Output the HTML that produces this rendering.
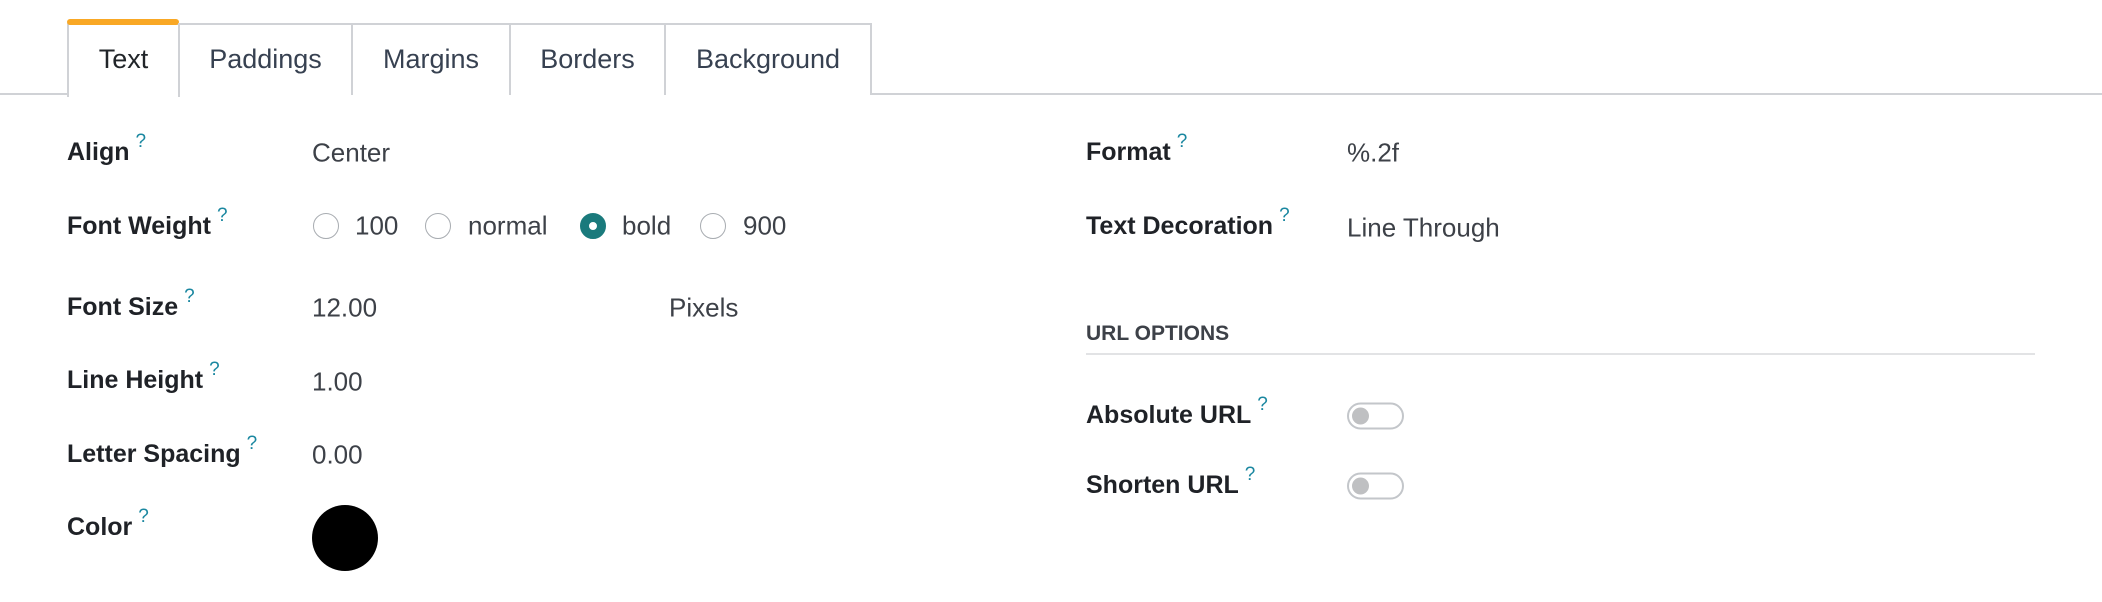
<!DOCTYPE html>
<html><head><meta charset="utf-8"><style>
*{margin:0;padding:0;box-sizing:border-box}
body{width:2102px;height:602px;background:#fff;font-family:"Liberation Sans",sans-serif;position:relative;overflow:hidden;color:#212529}
.a{position:absolute;white-space:nowrap}
.tab{position:absolute;top:23px;height:72px;border:2px solid #d0d2d6;border-bottom:none;font-size:27px;color:#374151;text-align:center;line-height:68px;background:#fff}
.lbl{position:absolute;font-size:25px;font-weight:bold;color:#1f2227;white-space:nowrap;transform:translateY(-50%)}
.lbl sup{color:#1a87a0;font-size:19px;font-weight:normal;margin-left:6px;position:relative;top:-4px}
.val{position:absolute;font-size:26px;color:#3d4148;white-space:nowrap;transform:translateY(-50%)}
.rad{position:absolute;width:26px;height:26px;border-radius:50%;border:1.5px solid #a8acb1;transform:translate(-50%,-50%);background:#fff}
.rad.on{border:9px solid #1a7a7c;background:#fff}
.tg{position:absolute;left:1347px;width:57px;height:27px;border:2px solid #c3c6ca;border-radius:14px;transform:translateY(-50%)}
.tg:after{content:"";position:absolute;left:3px;top:3px;width:17px;height:17px;border-radius:50%;background:#bfc0c2}
</style></head><body>
<div class="a" style="left:0;top:93px;width:2102px;height:2px;background:#d0d2d6"></div>
<div class="tab" style="left:67px;width:113px;height:74px;color:#212529">Text</div>
<div class="a" style="left:67px;top:19px;width:112px;height:6px;background:#f9a825;border-radius:3px"></div>
<div class="tab" style="left:178px;width:175px">Paddings</div>
<div class="tab" style="left:351px;width:160px">Margins</div>
<div class="tab" style="left:509px;width:157px">Borders</div>
<div class="tab" style="left:664px;width:208px">Background</div>

<div class="lbl" style="left:67px;top:151px">Align<sup>?</sup></div>
<div class="val" style="left:312px;top:153px">Center</div>
<div class="lbl" style="left:67px;top:225px">Font Weight<sup>?</sup></div>
<div class="rad" style="left:326px;top:226px"></div><div class="val" style="left:355px;top:226px">100</div>
<div class="rad" style="left:438px;top:226px"></div><div class="val" style="left:468px;top:226px">normal</div>
<div class="rad on" style="left:593px;top:226px"></div><div class="val" style="left:622px;top:226px">bold</div>
<div class="rad" style="left:713px;top:226px"></div><div class="val" style="left:743px;top:226px">900</div>
<div class="lbl" style="left:67px;top:306px">Font Size<sup>?</sup></div>
<div class="val" style="left:312px;top:308px">12.00</div>
<div class="val" style="left:669px;top:308px">Pixels</div>
<div class="lbl" style="left:67px;top:379px">Line Height<sup>?</sup></div>
<div class="val" style="left:312px;top:382px">1.00</div>
<div class="lbl" style="left:67px;top:453px">Letter Spacing<sup>?</sup></div>
<div class="val" style="left:312px;top:455px">0.00</div>
<div class="lbl" style="left:67px;top:526px">Color<sup>?</sup></div>
<div class="a" style="left:312px;top:505px;width:66px;height:66px;border-radius:50%;background:#000"></div>

<div class="lbl" style="left:1086px;top:151px">Format<sup>?</sup></div>
<div class="val" style="left:1347px;top:153px">%.2f</div>
<div class="lbl" style="left:1086px;top:225px">Text Decoration<sup>?</sup></div>
<div class="val" style="left:1347px;top:228px">Line Through</div>
<div class="a" style="left:1086px;top:322px;font-size:21px;font-weight:bold;color:#3d4148">URL OPTIONS</div>
<div class="a" style="left:1086px;top:353px;width:949px;height:2px;background:#e2e3e5"></div>
<div class="lbl" style="left:1086px;top:414px">Absolute URL<sup>?</sup></div>
<div class="tg" style="top:416px"></div>
<div class="lbl" style="left:1086px;top:484px">Shorten URL<sup>?</sup></div>
<div class="tg" style="top:486px"></div>
</body></html>
